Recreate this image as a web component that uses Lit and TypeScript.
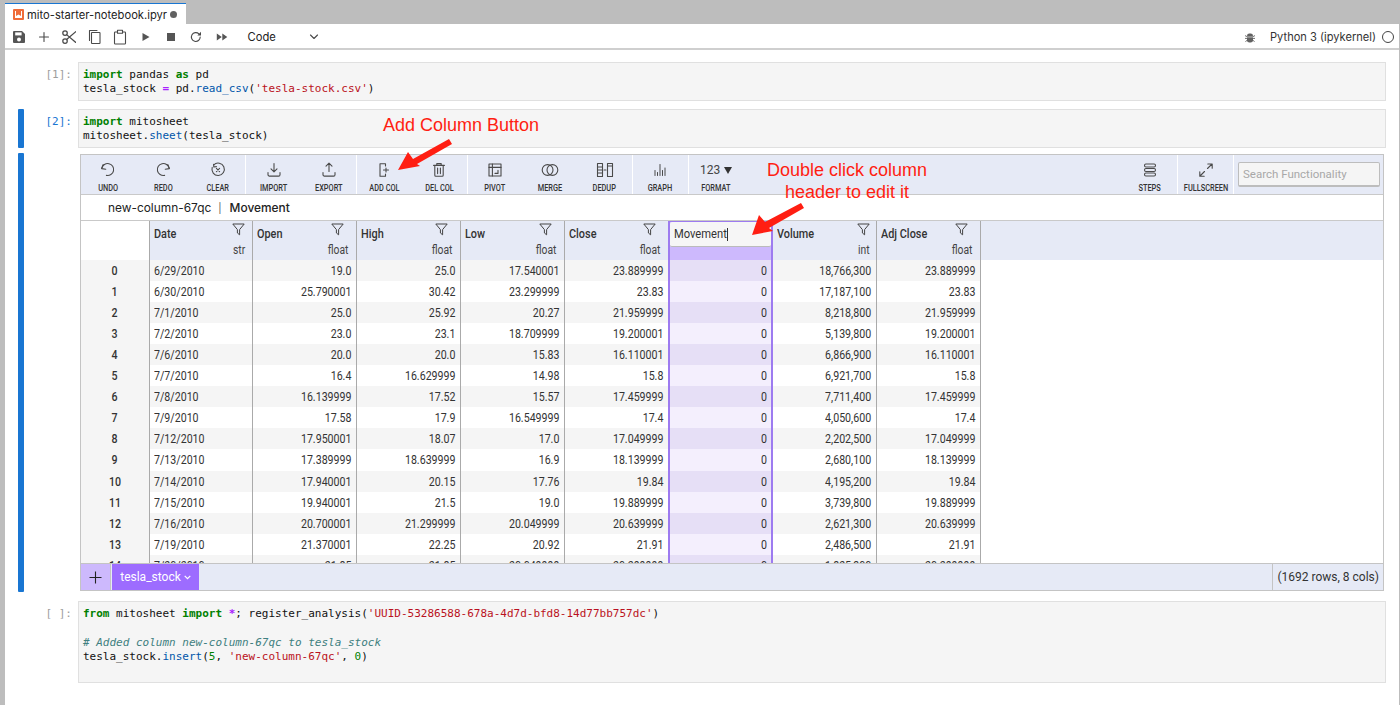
import { LitElement, html, css, svg } from "lit";
import { customElement } from "lit/decorators.js";

const rows: string[][] = [
  ["6/29/2010","19.0","25.0","17.540001","23.889999","0","18,766,300","23.889999"],
  ["6/30/2010","25.790001","30.42","23.299999","23.83","0","17,187,100","23.83"],
  ["7/1/2010","25.0","25.92","20.27","21.959999","0","8,218,800","21.959999"],
  ["7/2/2010","23.0","23.1","18.709999","19.200001","0","5,139,800","19.200001"],
  ["7/6/2010","20.0","20.0","15.83","16.110001","0","6,866,900","16.110001"],
  ["7/7/2010","16.4","16.629999","14.98","15.8","0","6,921,700","15.8"],
  ["7/8/2010","16.139999","17.52","15.57","17.459999","0","7,711,400","17.459999"],
  ["7/9/2010","17.58","17.9","16.549999","17.4","0","4,050,600","17.4"],
  ["7/12/2010","17.950001","18.07","17.0","17.049999","0","2,202,500","17.049999"],
  ["7/13/2010","17.389999","18.639999","16.9","18.139999","0","2,680,100","18.139999"],
  ["7/14/2010","17.940001","20.15","17.76","19.84","0","4,195,200","19.84"],
  ["7/15/2010","19.940001","21.5","19.0","19.889999","0","3,739,800","19.889999"],
  ["7/16/2010","20.700001","21.299999","20.049999","20.639999","0","2,621,300","20.639999"],
  ["7/19/2010","21.370001","22.25","20.92","21.91","0","2,486,500","21.91"],
  ["7/20/2010","21.85","21.85","20.049999","20.299999","0","1,825,300","20.299999"],
];
const heads: [string, string][] = [["Date","str"],["Open","float"],["High","float"],["Low","float"],["Close","float"],["Movement",""],["Volume","int"],["Adj Close","float"]];

const stroke = (w: number, h: number, body: unknown) => html`<svg width=${w} height=${h} viewBox="0 0 ${w} ${h}" fill="none" stroke="#4a4a4a" stroke-width="1.1" stroke-linecap="round" stroke-linejoin="round">${body}</svg>`;

const topIcons = {
  save: html`<svg width="14" height="14" viewBox="0 0 14 14"><path fill="#555" d="M1 2a1 1 0 0 1 1-1h8l3 3v8a1 1 0 0 1-1 1H2a1 1 0 0 1-1-1z"/><rect x="3.2" y="2.4" width="6.4" height="3" fill="#fff"/><circle cx="7" cy="9.4" r="2" fill="#fff"/></svg>`,
  plus: stroke(14,14,svg`<path d="M7 2.5v9M2.5 7h9"/>`),
  cut: stroke(14,14,svg`<g transform="translate(-1,-1) scale(1.12)"><circle cx="3.6" cy="3.6" r="2"/><circle cx="3.6" cy="10.8" r="2"/><path d="M5 5l8.2 7M5 9.4L13.2 2.4"/></g>`),
  copy: stroke(14,16,svg`<rect x="3.5" y="3.5" width="8.5" height="11" rx=".6"/><path d="M1.5 11.5V1.5h7.5"/>`),
  paste: stroke(14,16,svg`<rect x="1.5" y="3" width="11" height="12" rx=".8"/><rect x="4.5" y="1.2" width="5" height="3" fill="#fff"/>`),
  play: html`<svg width="10" height="10" viewBox="0 0 10 10"><path fill="#555" d="M1.5 1l7 4-7 4z"/></svg>`,
  stop: html`<svg width="10" height="10" viewBox="0 0 10 10"><rect x="1" y="1" width="8" height="8" fill="#555"/></svg>`,
  refresh: stroke(12,12,svg`<path d="M10.2 6a4.4 4.4 0 1 1-1.3-3.1"/><path fill="#4a4a4a" stroke="none" d="M11 .8v3.6H7.4z"/>`),
  ff: html`<svg width="12" height="10" viewBox="0 0 12 10"><path fill="#555" d="M.8 1.5l5 3.5-5 3.5zM6.3 1.5l5 3.5-5 3.5z"/></svg>`,
  chev: stroke(10,6,svg`<path d="M1.5 1l3.5 3.5L8.5 1"/>`),
  bug: html`<svg width="10" height="11" viewBox="0 0 10 11"><g stroke="#616161" stroke-width=".9"><path d="M0 3.6l2 1M10 3.6l-2 1M0 6.4h2M10 6.4H8M.4 9.6L2 8.4M9.6 9.6L8 8.4"/></g><rect x="2" y="1.4" width="6" height="9.2" rx="2.4" fill="#616161"/><path d="M2 5h6" stroke="#fff" stroke-width=".6"/></svg>`,
};

const toolIcons: Record<string, unknown> = {
  UNDO: stroke(18,18,svg`<path d="M4.2 3.5L2.6 7.6l4.2.6"/><path d="M2.8 7.2A6 6 0 1 1 7.4 14.4"/>`),
  REDO: stroke(18,18,svg`<path d="M13.8 3.5l1.6 4.1-4.2.6"/><path d="M15.2 7.2A6 6 0 1 0 10.6 14.4"/>`),
  CLEAR: stroke(18,18,svg`<path d="M4.8 3.8a6.2 6.2 0 1 1-1.6 2.6"/><path d="M4.6 3.2l.2 2.8 2.6-.4M7.4 7.4l3.2 3.2M10.6 7.4l-3.2 3.2"/>`),
  IMPORT: stroke(18,18,svg`<path d="M9 2.5v8M6 7.8l3 3 3-3"/><path d="M3 11.5v2.2a1.4 1.4 0 0 0 1.4 1.4h9.2a1.4 1.4 0 0 0 1.4-1.4v-2.2"/>`),
  EXPORT: stroke(18,18,svg`<path d="M9 10.5v-8M6 5.2l3-3 3 3"/><path d="M3 11.5v2.2a1.4 1.4 0 0 0 1.4 1.4h9.2a1.4 1.4 0 0 0 1.4-1.4v-2.2"/>`),
  "ADD COL": stroke(18,18,svg`<path d="M10.5 5V2.8H5v12.4h5.5V13"/><path d="M8.5 9h5M11 7v4"/>`),
  "DEL COL": stroke(18,18,svg`<path d="M3.6 4.4h10.8M6.8 4.2V2.6h4.4v1.6M4.8 4.6v9.6a1 1 0 0 0 1 1h6.4a1 1 0 0 0 1-1V4.6M7.6 7v5.6M10.4 7v5.6"/>`),
  PIVOT: stroke(18,18,svg`<rect x="3" y="3" width="12" height="12"/><path d="M3 6.4h12M6.4 3v12M9 12.4h3V9.4"/>`),
  MERGE: stroke(20,18,svg`<circle cx="7.6" cy="9" r="5.4"/><circle cx="12.4" cy="9" r="5.4"/>`),
  DEDUP: stroke(20,18,svg`<rect x="2.5" y="2.5" width="5" height="13"/><rect x="12.5" y="2.5" width="5" height="13"/><path d="M2.5 6h5M2.5 9h5M2.5 12h5M12.5 5h5M9 9h2"/>`),
  GRAPH: stroke(18,18,svg`<path d="M4 14.5V9.5M9 14.5V3.5M14 14.5V7M6.5 14.5v-3M11.5 14.5V9.5" stroke-width="1"/>`),
  STEPS: stroke(18,18,svg`<rect x="3.5" y="3" width="11" height="3" rx="1.4"/><rect x="3.5" y="7.5" width="11" height="3" rx="1.4"/><rect x="3.5" y="12" width="11" height="3" rx="1.4"/>`),
  FULLSCREEN: stroke(18,18,svg`<path d="M10.5 7.5L15 3M10.8 3H15.2V7.2M7.5 10.5L3 15M7.2 15.2H2.8V10.8"/>`),
};

const filterIcon = html`<svg class="filter" width="13" height="13" viewBox="0 0 13 13" fill="none" stroke="#444" stroke-width="1" stroke-linejoin="round"><path d="M.8 1h11.4L7.6 6.6v5.2L5.4 10V6.6z"/></svg>`;

@customElement("app-root")
export class AppRoot extends LitElement {
  static styles = css`
    :host { display: block; width: 1400px; height: 705px; overflow: hidden; position: relative; background: #bdbdbd; font-family: Roboto, "Liberation Sans", sans-serif; color: #222; }
    .tabbar { height: 24px; display: flex; padding-left: 5px; align-items: flex-end; }
    .tab { width: 181px; height: 21px; box-sizing: border-box; background: #fff; border-top: 1px solid #1976d2; display: flex; align-items: center; gap: 3px; padding: 1px 0 0 8px; font: 11.2px Inter, Roboto, sans-serif; white-space: nowrap; }
    .dot { width: 7px; height: 7px; border-radius: 50%; background: #616161; margin-top: -1px; }
    .main { margin: 0 1px 0 5px; background: #fff; height: 681px; }
    .nbtools { height: 26px; box-sizing: border-box; padding-top: 2px; padding-left: 1px; border-bottom: 2px solid #cfcfcf; display: flex; align-items: center; font: 11.2px Inter, Roboto, sans-serif; }
    .ti { width: 25.4px; display: flex; justify-content: center; }
    .celltype { margin-left: 13px; width: 61px; color: #222; }
    .spacer { flex: 1; }
    .kernel { margin-left: 15px; color: #333; font-size: 11.1px; }
    .kcircle { width: 10px; height: 10px; border: 1px solid #444; border-radius: 50%; margin: 0 5px 0 6px; }
    .nb { padding-top: 12px; }
    .cell { display: flex; margin-bottom: 8px; }
    .cell.c2 { margin-bottom: 5px; }
    .cell.c3 { margin-bottom: 9px; }
    .bar { width: 6px; margin-left: 13px; border-radius: 1px; background: transparent; flex: none; }
    .bar.on { background: #1976d2; }
    .prompt { width: 48px; flex: none; text-align: right; box-sizing: border-box; font: 11px/14.3px "DejaVu Sans Mono", monospace; color: #9e9e9e; padding-top: 6px; margin-right: 6px; }
    .prompt.on { color: #1976d2; }
    .code { width: 1308px; height: 39px; box-sizing: border-box; flex: none; background: #f5f5f5; border: 1px solid #e0e0e0; padding: 5px 4px 0; font: 11px/14.3px "DejaVu Sans Mono", monospace; white-space: pre; color: #111; }
    .code.tall { height: 82px; }
    .k { color: #008000; font-weight: bold; }
    .o { color: #aa22ff; font-weight: bold; }
    .f { color: #0055aa; }
    .s { color: #ba1121; }
    .n { color: #008000; }
    .c { color: #408080; font-style: italic; }
    .sheet { width: 1304px; height: 437px; margin: 1px 0 1px 2px; box-sizing: border-box; border: 1px solid #c4c4c4; display: flex; flex-direction: column; flex: none; background: #fff; }
    .mtools { height: 39px; flex: none; display: flex; background: #e6eaf6; border-bottom: 1px solid #c9c9c9; box-sizing: content-box; }
    .group { display: flex; border-right: 1px solid #fff; }
    .group.last { border-right: 0; }
    .btn { width: 54.8px; display: flex; flex-direction: column; align-items: center; padding-top: 6px; box-sizing: border-box; }
    .ic { height: 18px; display: flex; align-items: center; justify-content: center; }
    .lbl { font: 500 9px/10px Roboto, sans-serif; margin-top: 4px; color: #333; transform: scaleX(.82); white-space: nowrap; }
    .fmt { font: 12px/18px Roboto, sans-serif; color: #444; gap: 4px; }
    .tri { width: 0; height: 0; border-left: 4px solid transparent; border-right: 4px solid transparent; border-top: 7px solid #333; }
    .search { margin: 7px 3px 0 4px; width: 142px; height: 25px; box-sizing: border-box; background: #f5f5f5; border: 1px solid #bdbdbd; border-bottom-width: 2px; border-radius: 2px; font: 11.5px/22px Roboto, sans-serif; color: #a8a8a8; padding-left: 4px; }
    .formula { height: 25px; flex: none; border-bottom: 1px solid #c9c9c9; display: flex; align-items: center; padding-left: 27px; font: 500 11.9px Inter, Roboto, sans-serif; color: #222; }
    .formula .sep { margin: 0 8px 0 7px; font-weight: 400; font-size: 10px; color: #555; }
    .formula .cn { font-weight: 400; }
    .table { flex: 1; min-height: 0; overflow: hidden; font: 12.5px/21px Roboto, sans-serif; color: #333; }
    .hrow, .row { display: grid; grid-template-columns: 69px 103px repeat(7, 104px) 1fr; }
    .hrow { height: 38.6px; background: #e6eaf6; }
    .row { height: 21.1px; }
    .hcorner { background: #fff; border-right: 1px solid #aaa; }
    .h { border-right: 1px solid #aaa; box-sizing: border-box; padding: 0 6px 0 4px; display: flex; justify-content: space-between; }
    .h .name { font-weight: 500; line-height: 25px; color: #333; transform: scaleX(.87); transform-origin: left center; white-space: nowrap; height: 25px; }
    .rc { display: flex; flex-direction: column; align-items: center; }
    .filter { margin: 2px 0 8px; flex: none; }
    .h .type { font-size: 12px; line-height: 13px; color: #444; transform: scaleX(.86); }
    .h.mv { background: #cdb9fd; border: 2px solid #9d7bf0; border-width: 1px 2px 0; padding: 0; margin-left: -1px; display: block; }
    .mvinput { height: 25px; box-sizing: border-box; background: #f6f6f6; border-radius: 2px; border-bottom: 1px solid #bbb; font: 12px/25px Roboto, sans-serif; padding-left: 4px; color: #333; white-space: nowrap; }
    .mvinput span { display: inline-block; transform: scaleX(.93); transform-origin: left center; }
    .caret { display: inline-block; width: 1px; height: 13px; background: #222; vertical-align: -3px; }
    .cellv { border-right: 1px solid #aaa; padding: 0 5px 0 4px; text-align: right; box-sizing: border-box; white-space: nowrap; overflow: hidden; }
    .t { display: inline-block; transform: scaleX(.85); transform-origin: right center; }
    .date { text-align: left; }
    .date .t { transform-origin: left center; }
    .idx { text-align: center; font-weight: 500; background: #f5f5f5; padding: 0; }
    .idx .t { transform-origin: center; }
    .row.odd .cellv { background: #fff; }
    .row.even .cellv { background: #f5f5f5; }
    .row.odd .cellv.idx, .row.even .cellv.idx { background: #f5f5f5; }
    .row.even .cellv.m { background: #e6dff6; }
    .row.odd .cellv.m { background: #f4effd; }
    .cellv.m { border-left: 2px solid #9d7bf0; border-right: 2px solid #9d7bf0; margin-left: -1px; padding-right: 4px; }
    .foot { height: 27px; flex: none; display: flex; background: #e6eaf6; border-top: 1px solid #c4c4c4; box-sizing: border-box; font: 12px Roboto, sans-serif; }
    .add { width: 29px; background: #cdb9fd; border-right: 1px solid #c4c4c4; display: flex; align-items: center; justify-content: center; flex: none; }
    .stab { margin-left: 1px; width: 87px; background: #9d6cff; color: #fff; display: flex; align-items: center; justify-content: center; gap: 3px; flex: none; }
    .counts { margin-left: auto; border-left: 1px solid #c4c4c4; padding: 0 4px; display: flex; align-items: center; color: #333; }
    .note { position: absolute; color: #ff1e12; font: 18px/22px "Liberation Sans", Arial, sans-serif; text-align: center; white-space: nowrap; }
    .n1 { left: 383px; top: 114px; }
    .n2 { left: 767px; top: 159px; }
    .arrows { position: absolute; left: 0; top: 0; pointer-events: none; }
  `;

  render() {
    return html`
      <div class="tabbar"><div class="tab">
        <svg width="11" height="11" viewBox="0 0 11 11"><rect width="11" height="11" rx="1" fill="#ef6c3a"/><rect x="2" y="2" width="7" height="7" fill="#fff"/><path d="M3 2h5v5L5.5 5.5 3 7z" fill="#ef6c3a"/></svg>
        <span>mito-starter-notebook.ipyr</span><span class="dot"></span>
      </div></div>
      <div class="main">
        <div class="nbtools">
          <span class="ti">${topIcons.save}</span>
          <span class="ti">${topIcons.plus}</span>
          <span class="ti">${topIcons.cut}</span>
          <span class="ti">${topIcons.copy}</span>
          <span class="ti">${topIcons.paste}</span>
          <span class="ti">${topIcons.play}</span>
          <span class="ti">${topIcons.stop}</span>
          <span class="ti">${topIcons.refresh}</span>
          <span class="ti">${topIcons.ff}</span>
          <span class="celltype">Code</span>
          ${topIcons.chev}
          <span class="spacer"></span>
          ${topIcons.bug}
          <span class="kernel">Python 3 (ipykernel)</span>
          <span class="kcircle"></span>
        </div>
        <div class="nb">
          <div class="cell">
            <div class="bar"></div><div class="prompt">[1]:</div>
            <div class="code"><span class="k">import</span> pandas <span class="k">as</span> pd
tesla_stock <span class="o">=</span> pd.<span class="f">read_csv</span>(<span class="s">'tesla-stock.csv'</span>)</div>
          </div>
          <div class="cell c2">
            <div class="bar on"></div><div class="prompt on">[2]:</div>
            <div class="code"><span class="k">import</span> mitosheet
mitosheet.<span class="f">sheet</span>(tesla_stock)</div>
          </div>
          <div class="cell c3">
            <div class="bar on"></div><div class="prompt"></div>
            ${this.renderSheet()}
          </div>
          <div class="cell">
            <div class="bar"></div><div class="prompt">[ ]:</div>
            <div class="code tall"><span class="k">from</span> mitosheet <span class="k">import</span> <span class="o">*</span>; register_analysis(<span class="s">'UUID-53286588-678a-4d7d-bfd8-14d77bb757dc'</span>)

<span class="c"># Added column new-column-67qc to tesla_stock</span>
tesla_stock.<span class="f">insert</span>(<span class="n">5</span>, <span class="s">'new-column-67qc'</span>, <span class="n">0</span>)</div>
          </div>
        </div>
      </div>
      <div class="note n1">Add Column Button</div>
      <div class="note n2">Double click column<br>header to edit it</div>
      <svg class="arrows" width="1400" height="705" viewBox="0 0 1400 705">
        <path fill="#ff1e12" d="M398 170L408 152 413 159 449 139 452 144 417 164 420 166z"/>
        <path fill="#ff1e12" d="M752 235L759 215 765 222 801 203 804 208 769 228 773 231z"/>
      </svg>
    `;
  }

  renderBtn(l: string) {
    return html`<div class="btn"><div class="ic">${toolIcons[l]}</div><div class="lbl">${l}</div></div>`;
  }

  renderSheet() {
    const groups = [["UNDO","REDO","CLEAR"],["IMPORT","EXPORT"],["ADD COL","DEL COL"],["PIVOT","MERGE","DEDUP"],["GRAPH"]];
    return html`<div class="sheet">
      <div class="mtools">
        ${groups.map(g => html`<div class="group">${g.map(l => this.renderBtn(l))}</div>`)}
        <div class="group last"><div class="btn"><div class="ic fmt">123<span class="tri"></span></div><div class="lbl">FORMAT</div></div></div>
        <span class="spacer"></span>
        <div class="group">${this.renderBtn("STEPS")}</div>
        <div class="group">${this.renderBtn("FULLSCREEN")}</div>
        <div class="search">Search Functionality</div>
      </div>
      <div class="formula"><span class="cn">new-column-67qc</span><span class="sep">|</span><span>Movement</span></div>
      <div class="table">
        <div class="hrow">
          <div class="hcorner"></div>
          ${heads.map(([n, t]) => n === "Movement"
            ? html`<div class="h mv"><div class="mvinput"><span>Movement<i class="caret"></i></span></div></div>`
            : html`<div class="h"><span class="name">${n}</span><div class="rc">${filterIcon}<div class="type">${t}</div></div></div>`)}
        </div>
        ${rows.map((r, i) => html`<div class="row ${i % 2 ? "odd" : "even"}">
          <div class="cellv idx"><span class="t">${i}</span></div>
          ${r.map((v, j) => html`<div class="cellv ${j === 0 ? "date" : ""} ${j === 5 ? "m" : ""}"><span class="t">${v}</span></div>`)}
        </div>`)}
      </div>
      <div class="foot">
        <div class="add"><svg width="13" height="13" viewBox="0 0 13 13" stroke="#222" stroke-width="1.1"><path d="M6.5 0.5v12M.5 6.5h12"/></svg></div>
        <div class="stab">tesla_stock <svg width="7" height="5" viewBox="0 0 7 5" fill="none" stroke="#fff" stroke-width="1.2"><path d="M.7.8L3.5 3.6 6.3.8"/></svg></div>
        <div class="counts">(1692 rows, 8 cols)</div>
      </div>
    </div>`;
  }
}
